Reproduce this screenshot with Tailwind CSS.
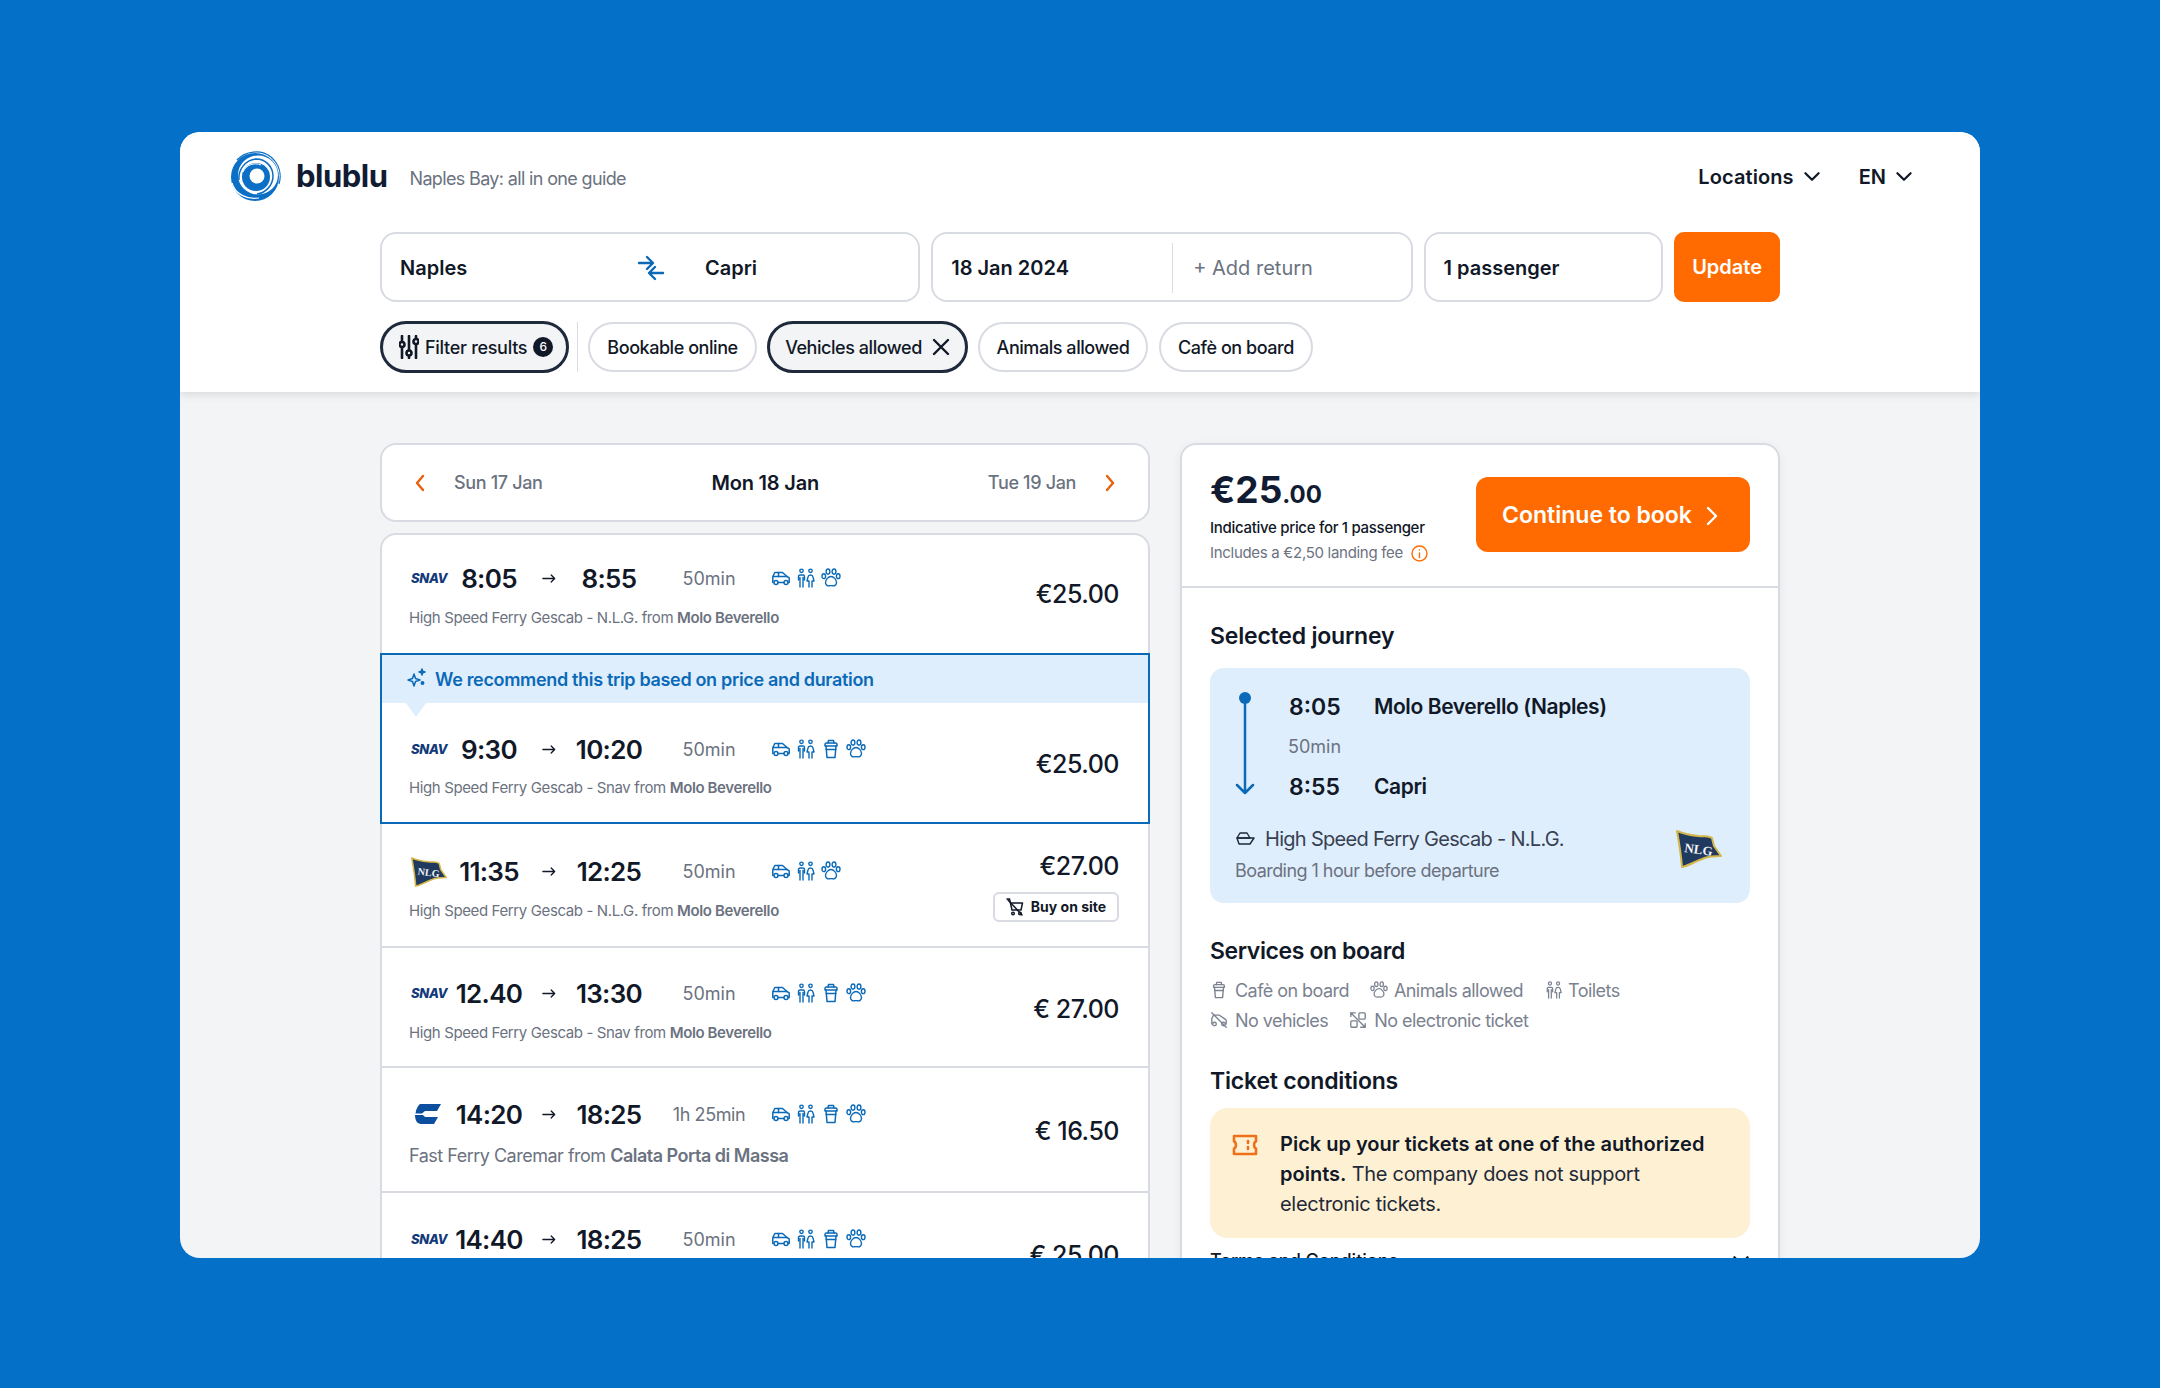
<!DOCTYPE html>
<html lang="en">
<head>
<meta charset="UTF-8">
<title>blublu</title>
<script src="https://cdn.jsdelivr.net/npm/@tailwindcss/browser@4"></script>
</head>
<body class="bg-[#0470c8] [font-family:Inter,sans-serif] text-[#111827] h-[1388px] overflow-hidden pt-[132px]">

<!-- shared icons -->
<svg class="absolute w-0 h-0" xmlns="http://www.w3.org/2000/svg">
  <symbol id="i-car" viewBox="0 0 20 20"><g fill="none" stroke="currentColor" stroke-width="1.5" stroke-linecap="round" stroke-linejoin="round"><path d="M2 14.5H1.8V8.5L3.8 4.5H11.5L16 8.5L18.2 9.8V14.5H17"/><path d="M2.5 8.5H16"/><path d="M7.5 4.5V8.5"/><path d="M7.5 14.5H12.5"/><circle cx="5" cy="14.5" r="2"/><circle cx="15" cy="14.5" r="2"/></g></symbol>
  <symbol id="i-people" viewBox="0 0 20 20"><g fill="none" stroke="currentColor" stroke-width="1.4" stroke-linecap="round" stroke-linejoin="round"><circle cx="5.5" cy="2.8" r="1.7"/><circle cx="14.5" cy="2.8" r="1.7"/><path d="M2.5 12V8.5C2.5 7.4 3.4 7 4 7H7C7.8 7 8.5 7.6 8.5 8.5V12M4 9.5V19M7 9.5V19"/><path d="M14.5 7C13 7 12.2 8 12 9L11 13H13V19M14.5 7C16 7 16.8 8 17 9L18 13H16V19"/></g></symbol>
  <symbol id="i-cup" viewBox="0 0 20 20"><g fill="none" stroke="currentColor" stroke-width="1.5" stroke-linecap="round" stroke-linejoin="round"><path d="M4 7V5.5C4 4.5 4.7 4 5.5 4H14.5C15.3 4 16 4.5 16 5.5V7Z"/><path d="M7 4L7.5 1.5H12.5L13 4"/><path d="M5 7L6 18.5H14L15 7"/><path d="M5.3 10.5H14.7"/></g></symbol>
  <symbol id="i-paw" viewBox="0 0 20 20"><g fill="none" stroke="currentColor" stroke-width="1.4" stroke-linecap="round" stroke-linejoin="round"><ellipse cx="7" cy="3.6" rx="1.9" ry="2.6"/><ellipse cx="13" cy="3.6" rx="1.9" ry="2.6"/><ellipse cx="2.8" cy="8.2" rx="1.8" ry="2.4"/><ellipse cx="17.2" cy="8.2" rx="1.8" ry="2.4"/><path d="M10 8.5C7.5 8.5 4.5 11.5 4.5 14.5C4.5 16.8 6.5 18 8 17.8C9 17.6 11 17.6 12 17.8C13.5 18 15.5 16.8 15.5 14.5C15.5 11.5 12.5 8.5 10 8.5Z"/></g></symbol>
  <symbol id="i-arrow" viewBox="0 0 16 12"><path d="M1 6H14.5M10.5 2L14.5 6L10.5 10" fill="none" stroke="currentColor" stroke-width="1.5" stroke-linecap="round" stroke-linejoin="round"/></symbol>
  <symbol id="i-chev" viewBox="0 0 16 10"><path d="M2 2L8 8L14 2" fill="none" stroke="currentColor" stroke-width="2" stroke-linecap="round" stroke-linejoin="round"/></symbol>
  <symbol id="i-flag" viewBox="0 0 46 38"><path d="M1 1C8 4 14 5 22 6C28 7 32 5 36 8L38 16L45 26C38 26 32 26 26 29C18 32 12 36 6 37C5 25 3 12 1 1Z" fill="#20395f" stroke="#d4b64a" stroke-width="2" stroke-linejoin="round"/><text x="22" y="24" text-anchor="middle" transform="rotate(8 22 24)" font-family="Liberation Serif" font-size="13" font-weight="700" fill="#f3f4f6">NLG</text></symbol>
</svg>

<div class="w-[1800px] h-[1126px] mx-auto bg-[#f3f4f6] rounded-[20px] overflow-hidden">

  <!-- header -->
  <header class="relative h-[260px] bg-white shadow-[0_3px_8px_rgba(0,0,0,0.1)]">
    <div class="flex items-center justify-between h-[88px] pl-[49px] pr-[67px]">
      <div class="flex items-center">
        <svg class="w-[54px] h-[52px]" viewBox="0 0 54 52" fill="none">
          <circle cx="26" cy="27" r="24" fill="#0b6fc6"/>
          <ellipse cx="29" cy="25" rx="20" ry="19.5" fill="white"/>
          <path d="M8 10C16 1 32 -1 42 7C50 14 53 24 50 34" stroke="#0b6fc6" stroke-width="1.2"/>
          <path d="M3 33C6 44 18 50 30 48" stroke="white" stroke-width="1.2"/>
          <path d="M10 30C9 20 16 10 27 9C37 9 44 17 44 26C44 36 36 43 28 44" stroke="#0b6fc6" stroke-width="1.5"/>
          <circle cx="27" cy="27" r="14" fill="#0b6fc6"/>
          <path d="M14 22C17 15 25 12 32 15" stroke="white" stroke-width="1"/>
          <circle cx="28" cy="26" r="7.5" fill="white"/>
        </svg>
        <span class="ml-[13px] text-[31px] font-bold tracking-[-0.5px] text-[#111c33]">blublu</span>
        <span class="ml-[22px] mt-1 text-[18px] text-[#6b7280] tracking-[-0.65px]">Naples Bay: all in one guide</span>
      </div>
      <nav class="flex items-center gap-[38px] text-[20px] font-semibold pt-[1px]">
        <span class="flex items-center gap-[9px] tracking-[0.1px]">Locations <svg class="w-[18px] h-[11px]"><use href="#i-chev"/></svg></span>
        <span class="flex items-center gap-[9px]">EN <svg class="w-[18px] h-[11px]"><use href="#i-chev"/></svg></span>
      </nav>
    </div>

    <div class="w-[1400px] mx-auto mt-[12px]">
      <div class="flex gap-[11px] h-[70px] text-[20px] font-semibold">
        <div class="w-[541px] flex items-center bg-white border-2 border-[#d8dbe1] rounded-[16px] pl-[18px] pt-[1px]">
          <span class="w-[237px]">Naples</span>
          <svg class="w-[28px] h-[26px]" viewBox="0 0 28 26" fill="none" stroke="#0b6ab8" stroke-width="2.4" stroke-linecap="round" stroke-linejoin="round"><path d="M2 8H15M10 2L16 8L10 14"/><path d="M26 18H13M18 12L12 18L18 24"/></svg>
          <span class="ml-[40px]">Capri</span>
        </div>
        <div class="w-[482px] flex items-center bg-white border-2 border-[#d8dbe1] rounded-[16px] pl-[18px] pt-[1px]">
          <span class="w-[221px]">18 Jan 2024</span>
          <span class="h-[50px] w-px bg-[#d8dbe1]"></span>
          <span class="ml-[20px] font-normal text-[#6b7280]">+ Add return</span>
        </div>
        <div class="w-[240px] flex items-center bg-white border-2 border-[#d8dbe1] rounded-[16px] pl-[18px] pt-[1px]">1 passenger</div>
        <button class="w-[106px] bg-[#ff6b00] text-white rounded-[10px]">Update</button>
      </div>

      <div class="flex items-center h-[52px] mt-[19px] text-[18px] font-medium">
        <div class="w-[189px] h-[52px] flex items-center bg-[#f3f4f6] border-[3px] border-[#1e293b] rounded-full pl-[16px]">
          <svg class="w-[20px] h-[24px]" viewBox="0 0 20 24" fill="none" stroke="#111827" stroke-width="2.6" stroke-linecap="round"><path d="M3 1V6M3 13V23M10 1V15M10 21V23M17 1V3M17 10V23"/><circle cx="3" cy="9.5" r="2.5"/><circle cx="10" cy="18" r="2.5"/><circle cx="17" cy="6.5" r="2.5"/></svg>
          <span class="ml-[6px] tracking-[-0.3px]">Filter results</span>
          <span class="ml-[6px] w-[20px] h-[20px] rounded-full bg-[#111827] text-white text-[12px] flex items-center justify-center">6</span>
        </div>
        <span class="w-px h-[50px] bg-[#d8dbe1] ml-[8px] mr-[10px]"></span>
        <div class="w-[169px] h-[50px] flex items-center justify-center border-2 border-[#d8dbe1] rounded-full tracking-[-0.45px]">Bookable online</div>
        <div class="ml-[10px] w-[201px] h-[52px] flex items-center justify-center gap-[10px] bg-[#f3f4f6] border-[3px] border-[#1e293b] rounded-full tracking-[-0.45px]">Vehicles allowed
          <svg class="w-[18px] h-[18px]" viewBox="0 0 18 18" stroke="#111827" stroke-width="2.4" stroke-linecap="round"><path d="M2 2L16 16M16 2L2 16"/></svg>
        </div>
        <div class="ml-[10px] w-[170px] h-[50px] flex items-center justify-center border-2 border-[#d8dbe1] rounded-full tracking-[-0.45px]">Animals allowed</div>
        <div class="ml-[11px] w-[154px] h-[50px] flex items-center justify-center border-2 border-[#d8dbe1] rounded-full tracking-[-0.45px]">Cafè on board</div>
      </div>
    </div>
  </header>

  <main class="w-[1400px] mx-auto mt-[51px] flex items-start gap-[30px]">

    <!-- trips -->
    <section class="w-[770px]">
      <div class="h-[79px] flex items-center bg-white border-2 border-[#d8dbe1] rounded-[16px] pl-[32px] pr-[32px] text-[18px] text-[#6b7280]">
        <svg class="w-[12px] h-[20px]" viewBox="0 0 12 20" fill="none" stroke="#e8600a" stroke-width="2.4" stroke-linecap="round" stroke-linejoin="round"><path d="M9 3L3 10L9 17"/></svg>
        <span class="ml-[28px] font-medium tracking-[-0.35px]">Sun 17 Jan</span>
        <span class="flex-1 text-center text-[20px] font-semibold text-[#111827] tracking-[-0.2px]">Mon 18 Jan</span>
        <span class="mr-[28px] font-medium tracking-[-0.35px]">Tue 19 Jan</span>
        <svg class="w-[12px] h-[20px]" viewBox="0 0 12 20" fill="none" stroke="#e8600a" stroke-width="2.4" stroke-linecap="round" stroke-linejoin="round"><path d="M3 3L9 10L3 17"/></svg>
      </div>

      <div class="mt-[11px] bg-white border-x-2 border-t-2 border-[#d8dbe1] rounded-t-[16px]">

        <!-- row 1 -->
        <div class="h-[118px] flex items-center justify-between pl-[27px] pr-[29px]">
          <div class="pt-[4px]">
            <div class="flex items-center h-[32px]">
              <span class="w-[38px] ml-[2px] text-[13px] font-extrabold italic text-[#123a7a] tracking-[-0.3px]">SNAV</span>
              <span class="w-[80px] text-center text-[26px] font-semibold tracking-[-0.7px]">8:05</span>
              <svg class="ml-[13px] w-[14px] h-[11px]"><use href="#i-arrow"/></svg>
              <span class="ml-[13px] w-[80px] text-center text-[26px] font-semibold tracking-[-0.7px]">8:55</span>
              <span class="ml-[10px] w-[100px] text-center text-[18px] text-[#6b7280]">50min</span>
              <div class="ml-[12px] flex gap-[5px] text-[#0b6ab8] -mt-[1px]">
                <svg class="w-[20px] h-[20px]"><use href="#i-car"/></svg><svg class="w-[20px] h-[20px]"><use href="#i-people"/></svg><svg class="w-[20px] h-[20px]"><use href="#i-paw"/></svg>
              </div>
            </div>
            <p class="mt-[12px] text-[15px] text-[#6b7280] tracking-[-0.38px]">High Speed Ferry Gescab - N.L.G. from <b class="font-semibold">Molo Beverello</b></p>
          </div>
          <span class="text-[25px] font-medium tracking-[-0.5px] pt-[2px]">€25.00</span>
        </div>

        <!-- recommended -->
        <div class="-mx-[2px] h-[171px] border-2 border-[#0b6ab8] bg-white">
          <div class="relative h-[48px] flex items-center bg-[#dfeefd] pl-[25px] text-[18px] font-semibold text-[#0b6ab8] tracking-[-0.33px]">
            <svg class="w-[20px] h-[20px] -mt-[2px]" viewBox="0 0 20 20" fill="none" stroke="#0b6ab8" stroke-width="1.5" stroke-linejoin="round"><path d="M7 6L8.5 10.5L13 12L8.5 13.5L7 18L5.5 13.5L1 12L5.5 10.5Z"/><path d="M15 1L15.7 3.3L18 4L15.7 4.7L15 7L14.3 4.7L12 4L14.3 3.3Z" fill="#0b6ab8"/><circle cx="15.5" cy="15" r="1.2" fill="#0b6ab8"/></svg>
            <span class="ml-[8px]">We recommend this trip based on price and duration</span>
            <span class="absolute left-[24px] top-[48px] w-0 h-0 border-x-[10px] border-x-transparent border-t-[14px] border-t-[#dfeefd]"></span>
          </div>
          <div class="h-[119px] flex items-center justify-between pl-[27px] pr-[29px]">
            <div class="pt-[8px]">
              <div class="flex items-center h-[32px]">
                <span class="w-[38px] ml-[2px] text-[13px] font-extrabold italic text-[#123a7a] tracking-[-0.3px]">SNAV</span>
                <span class="w-[80px] text-center text-[26px] font-semibold tracking-[-0.7px]">9:30</span>
                <svg class="ml-[13px] w-[14px] h-[11px]"><use href="#i-arrow"/></svg>
                <span class="ml-[13px] w-[80px] text-center text-[26px] font-semibold tracking-[-0.7px]">10:20</span>
                <span class="ml-[10px] w-[100px] text-center text-[18px] text-[#6b7280]">50min</span>
                <div class="ml-[12px] flex gap-[5px] text-[#0b6ab8] -mt-[1px]">
                  <svg class="w-[20px] h-[20px]"><use href="#i-car"/></svg><svg class="w-[20px] h-[20px]"><use href="#i-people"/></svg><svg class="w-[20px] h-[20px]"><use href="#i-cup"/></svg><svg class="w-[20px] h-[20px]"><use href="#i-paw"/></svg>
                </div>
              </div>
              <p class="mt-[12px] text-[15px] text-[#6b7280] tracking-[-0.38px]">High Speed Ferry Gescab - Snav from <b class="font-semibold">Molo Beverello</b></p>
            </div>
            <span class="text-[25px] font-medium tracking-[-0.5px] pt-[5px]">€25.00</span>
          </div>
        </div>

        <!-- row 3 -->
        <div class="h-[124px] flex items-center justify-between border-b-2 border-[#d8dbe1] pl-[27px] pr-[29px]">
          <div class="pt-[8px]">
            <div class="flex items-center h-[32px]">
              <svg class="w-[36px] h-[30px] ml-[2px]"><use href="#i-flag"/></svg>
              <span class="ml-[2px] w-[80px] text-center text-[26px] font-semibold tracking-[-0.7px]">11:35</span>
              <svg class="ml-[13px] w-[14px] h-[11px]"><use href="#i-arrow"/></svg>
              <span class="ml-[13px] w-[80px] text-center text-[26px] font-semibold tracking-[-0.7px]">12:25</span>
              <span class="ml-[10px] w-[100px] text-center text-[18px] text-[#6b7280]">50min</span>
              <div class="ml-[12px] flex gap-[5px] text-[#0b6ab8] -mt-[1px]">
                <svg class="w-[20px] h-[20px]"><use href="#i-car"/></svg><svg class="w-[20px] h-[20px]"><use href="#i-people"/></svg><svg class="w-[20px] h-[20px]"><use href="#i-paw"/></svg>
              </div>
            </div>
            <p class="mt-[12px] text-[15px] text-[#6b7280] tracking-[-0.38px]">High Speed Ferry Gescab - N.L.G. from <b class="font-semibold">Molo Beverello</b></p>
          </div>
          <div class="flex flex-col items-end gap-[10px] pt-[1px]">
            <span class="text-[25px] font-medium tracking-[-0.5px] leading-[32px]">€27.00</span>
            <span class="h-[30px] w-[126px] flex items-center justify-center gap-[7px] border-2 border-[#d8dbe1] rounded-[6px] text-[14px] font-bold">
              <svg class="w-[18px] h-[18px]" viewBox="0 0 18 18" fill="none" stroke="#111827" stroke-width="1.5" stroke-linecap="round" stroke-linejoin="round"><path d="M1 1H3.5L6 12H15L16.5 5H5"/><circle cx="7" cy="15.5" r="1.3"/><circle cx="14" cy="15.5" r="1.3"/><path d="M2 2L16 17"/></svg>
              Buy on site
            </span>
          </div>
        </div>

        <!-- row 4 -->
        <div class="h-[120px] flex items-center justify-between border-b-2 border-[#d8dbe1] pl-[27px] pr-[29px]">
          <div class="pt-[8px]">
            <div class="flex items-center h-[32px]">
              <span class="w-[38px] ml-[2px] text-[13px] font-extrabold italic text-[#123a7a] tracking-[-0.3px]">SNAV</span>
              <span class="w-[80px] text-center text-[26px] font-semibold tracking-[-0.7px]">12.40</span>
              <svg class="ml-[13px] w-[14px] h-[11px]"><use href="#i-arrow"/></svg>
              <span class="ml-[13px] w-[80px] text-center text-[26px] font-semibold tracking-[-0.7px]">13:30</span>
              <span class="ml-[10px] w-[100px] text-center text-[18px] text-[#6b7280]">50min</span>
              <div class="ml-[12px] flex gap-[5px] text-[#0b6ab8] -mt-[1px]">
                <svg class="w-[20px] h-[20px]"><use href="#i-car"/></svg><svg class="w-[20px] h-[20px]"><use href="#i-people"/></svg><svg class="w-[20px] h-[20px]"><use href="#i-cup"/></svg><svg class="w-[20px] h-[20px]"><use href="#i-paw"/></svg>
              </div>
            </div>
            <p class="mt-[12px] text-[15px] text-[#6b7280] tracking-[-0.38px]">High Speed Ferry Gescab - Snav from <b class="font-semibold">Molo Beverello</b></p>
          </div>
          <span class="text-[25px] font-medium tracking-[-0.5px] pt-[5px]">€ 27.00</span>
        </div>

        <!-- row 5 -->
        <div class="h-[125px] flex items-center justify-between border-b-2 border-[#d8dbe1] pl-[27px] pr-[29px]">
          <div class="pt-[8px]">
            <div class="flex items-center h-[32px]">
              <svg class="w-[26px] h-[20px] ml-[6px] mr-[8px]" viewBox="0 0 26 20" fill="#0b4f9e"><path d="M5 0H26L22 7H10L7 9.5H0.5C1 5 3 1.5 5 0Z"/><path d="M0 11H8L10 13H23L19 20H6C2 20 0 16 0 11Z"/></svg>
              <span class="w-[80px] text-center text-[26px] font-semibold tracking-[-0.7px]">14:20</span>
              <svg class="ml-[13px] w-[14px] h-[11px]"><use href="#i-arrow"/></svg>
              <span class="ml-[13px] w-[80px] text-center text-[26px] font-semibold tracking-[-0.7px]">18:25</span>
              <span class="ml-[10px] w-[100px] text-center text-[18px] text-[#6b7280] tracking-[-0.4px]">1h 25min</span>
              <div class="ml-[12px] flex gap-[5px] text-[#0b6ab8] -mt-[1px]">
                <svg class="w-[20px] h-[20px]"><use href="#i-car"/></svg><svg class="w-[20px] h-[20px]"><use href="#i-people"/></svg><svg class="w-[20px] h-[20px]"><use href="#i-cup"/></svg><svg class="w-[20px] h-[20px]"><use href="#i-paw"/></svg>
              </div>
            </div>
            <p class="mt-[12px] text-[18px] text-[#6b7280] tracking-[-0.5px]">Fast Ferry Caremar from <b class="font-semibold">Calata Porta di Massa</b></p>
          </div>
          <span class="text-[25px] font-medium tracking-[-0.5px] pt-[5px]">€ 16.50</span>
        </div>

        <!-- row 6 -->
        <div class="h-[122px] flex items-center justify-between pl-[27px] pr-[29px]">
          <div class="pt-[6px]">
            <div class="flex items-center h-[32px]">
              <span class="w-[38px] ml-[2px] text-[13px] font-extrabold italic text-[#123a7a] tracking-[-0.3px]">SNAV</span>
              <span class="w-[80px] text-center text-[26px] font-semibold tracking-[-0.7px]">14:40</span>
              <svg class="ml-[13px] w-[14px] h-[11px]"><use href="#i-arrow"/></svg>
              <span class="ml-[13px] w-[80px] text-center text-[26px] font-semibold tracking-[-0.7px]">18:25</span>
              <span class="ml-[10px] w-[100px] text-center text-[18px] text-[#6b7280]">50min</span>
              <div class="ml-[12px] flex gap-[5px] text-[#0b6ab8] -mt-[1px]">
                <svg class="w-[20px] h-[20px]"><use href="#i-car"/></svg><svg class="w-[20px] h-[20px]"><use href="#i-people"/></svg><svg class="w-[20px] h-[20px]"><use href="#i-cup"/></svg><svg class="w-[20px] h-[20px]"><use href="#i-paw"/></svg>
              </div>
            </div>
            <p class="mt-[12px] text-[15px] text-[#6b7280] tracking-[-0.38px]">High Speed Ferry Gescab - Snav from <b class="font-semibold">Molo Beverello</b></p>
          </div>
          <span class="text-[25px] font-medium tracking-[-0.5px] pt-[3px]">€ 25.00</span>
        </div>
      </div>
    </section>

    <!-- summary -->
    <aside class="w-[600px] bg-white border-2 border-[#d8dbe1] rounded-[16px] shadow-[0_2px_10px_rgba(0,0,0,0.06)]">
      <div class="h-[143px] flex justify-between border-b-2 border-[#d8dbe1] pl-[28px] pr-[28px]">
        <div class="pt-[25px]">
          <div class="font-bold text-[37px] leading-[40px] text-[#111c33]">€25<span class="text-[24px]">.00</span></div>
          <p class="mt-[2px] text-[15px] leading-[22px] font-medium tracking-[-0.3px]">Indicative price for 1 passenger</p>
          <p class="mt-[3px] flex items-center text-[15px] leading-[22px] text-[#6b7280] tracking-[-0.3px]">Includes a €2,50 landing fee
            <svg class="ml-[8px] w-[17px] h-[17px]" viewBox="0 0 17 17" fill="none" stroke="#ff6b00" stroke-width="1.4" stroke-linecap="round"><circle cx="8.5" cy="8.5" r="7.5"/><path d="M8.5 8V12.5M8.5 5V5.1"/></svg>
          </p>
        </div>
        <button class="mt-[32px] w-[274px] h-[75px] flex items-center justify-center gap-[14px] bg-[#ff6b00] text-white text-[23px] font-semibold rounded-[12px] pt-[2px] pr-[6px]">Continue to book
          <svg class="w-[12px] h-[20px]" viewBox="0 0 12 20" fill="none" stroke="white" stroke-width="2.4" stroke-linecap="round" stroke-linejoin="round"><path d="M2 2L10 10L2 18"/></svg>
        </button>
      </div>

      <div class="pl-[28px] pr-[28px]">
        <h2 class="mt-[32px] text-[23px] leading-[32px] font-semibold tracking-[-0.2px]">Selected journey</h2>
        <div class="mt-[16px] h-[235px] bg-[#dfeefd] rounded-[14px] pl-[25px] pr-[28px] pt-[23px]">
          <div class="flex">
            <svg class="w-[20px] h-[104px]" viewBox="0 0 20 104" fill="none" stroke="#0b6ab8" stroke-width="2.5" stroke-linecap="round" stroke-linejoin="round"><circle cx="10" cy="7" r="6" fill="#0b6ab8" stroke="none"/><path d="M10 8V102M2 94L10 102L18 94"/></svg>
            <div class="ml-[31px]">
              <div class="flex items-center h-[32px]">
                <span class="w-[88px] text-[23px] font-semibold pl-[3px]">8:05</span>
                <span class="text-[21px] font-semibold tracking-[-0.4px]">Molo Beverello (Naples)</span>
              </div>
              <div class="h-[46px] flex items-center text-[18px] text-[#6b7280] pl-[2px]">50min</div>
              <div class="flex items-center h-[32px] mt-[2px]">
                <span class="w-[88px] text-[23px] font-semibold pl-[3px]">8:55</span>
                <span class="text-[21px] font-semibold tracking-[-0.4px]">Capri</span>
              </div>
            </div>
          </div>
          <div class="mt-[21px] flex items-start justify-between">
            <div>
              <div class="flex items-center text-[20px] text-[#374151] tracking-[-0.7px]">
                <svg class="w-[20px] h-[14px] mr-[10px]" viewBox="0 0 20 14" fill="none" stroke="#1f2937" stroke-width="1.4" stroke-linejoin="round"><path d="M5 1H12L15 6H2Z"/><path d="M2 6H19L15 12H4Z"/></svg>
                High Speed Ferry Gescab - N.L.G.
              </div>
              <p class="mt-[3px] text-[18px] text-[#6b7280] tracking-[-0.55px]">Boarding 1 hour before departure</p>
            </div>
            <svg class="mt-[6px] w-[46px] h-[38px]"><use href="#i-flag"/></svg>
          </div>
        </div>

        <h2 class="mt-[32px] text-[23px] leading-[32px] font-semibold tracking-[-0.4px]">Services on board</h2>
        <div class="mt-[8px] flex items-center h-[30px] text-[18px] text-[#7b828f] tracking-[-0.55px]">
          <svg class="w-[18px] h-[18px] mr-[7px]"><use href="#i-cup"/></svg>Cafè on board
          <svg class="w-[18px] h-[18px] ml-[21px] mr-[6px]"><use href="#i-paw"/></svg>Animals allowed
          <svg class="w-[18px] h-[18px] ml-[22px] mr-[5px]"><use href="#i-people"/></svg>Toilets
        </div>
        <div class="flex items-center h-[30px] text-[18px] text-[#7b828f] tracking-[-0.55px]">
          <svg class="w-[18px] h-[18px] mr-[7px]" viewBox="0 0 20 20" fill="none" stroke="currentColor" stroke-width="1.5" stroke-linecap="round" stroke-linejoin="round"><path d="M2 14.5V8.5L4 4.5H10L16 8.5L18 10V14.5"/><circle cx="5" cy="14.5" r="2"/><circle cx="15" cy="14.5" r="2"/><path d="M2 2L18 18"/></svg>No vehicles
          <svg class="w-[18px] h-[18px] ml-[21px] mr-[7px]" viewBox="0 0 20 20" fill="none" stroke="currentColor" stroke-width="1.5" stroke-linecap="round"><rect x="11" y="2" width="7" height="7" rx="1"/><rect x="2" y="11" width="7" height="7" rx="1"/><path d="M2 2L18 18M2 6V2H7M18 14V18H13"/></svg>No electronic ticket
        </div>

        <h2 class="mt-[30px] text-[23px] leading-[32px] font-semibold tracking-[-0.2px]">Ticket conditions</h2>
        <div class="mt-[11px] h-[130px] flex bg-[#fef0d3] rounded-[18px] pl-[22px] pr-[28px] pt-[21px]">
          <svg class="mt-[5px] w-[26px] h-[22px] shrink-0" viewBox="0 0 26 22" fill="none" stroke="#f0701a" stroke-width="2.6" stroke-linejoin="round" stroke-linecap="round"><path d="M2 2H24V7.5C21.5 8 21.5 14 24 14.5V20H2V14.5C4.5 14 4.5 8 2 7.5Z"/><path d="M16 7V9M16 13V15"/></svg>
          <p class="ml-[22px] text-[20px] leading-[30px] tracking-[-0.3px] text-[#1f2937]"><b class="font-semibold text-[#111827] tracking-[0px]">Pick up your tickets at one of the authorized points.</b> The company does not support electronic tickets.</p>
        </div>
        <div class="mt-[9px] flex items-center justify-between text-[18px] font-medium">Terms and Conditions
          <svg class="w-[18px] h-[11px]"><use href="#i-chev"/></svg>
        </div>
      </div>
    </aside>
  </main>
</div>
</body>
</html>
